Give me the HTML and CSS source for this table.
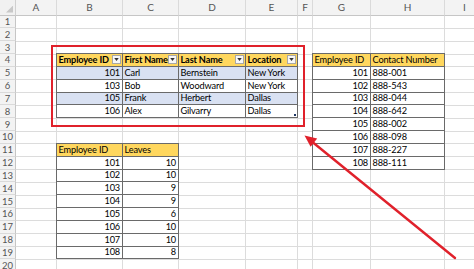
FILE: index.html
```html
<!DOCTYPE html>
<html>
<head>
<meta charset="utf-8">
<link rel="stylesheet" href="styles.css">
</head>
<body>
<div class="sheet">
  <div class="corner"></div>
  <div class="ch">A</div><div class="ch">B</div><div class="ch">C</div><div class="ch">D</div><div class="ch">E</div><div class="ch">F</div><div class="ch">G</div><div class="ch">H</div><div class="ch">I</div>
  <div class="rh">1</div><div class="rh">2</div><div class="rh">3</div><div class="rh">4</div><div class="rh">5</div>
  <div class="rh">6</div><div class="rh">7</div><div class="rh">8</div><div class="rh">9</div><div class="rh">10</div>
  <div class="rh">11</div><div class="rh">12</div><div class="rh">13</div><div class="rh">14</div><div class="rh">15</div>
  <div class="rh">16</div><div class="rh">17</div><div class="rh">18</div><div class="rh">19</div><div class="rh">20</div>

  <div class="cells">
    <div></div><div></div><div></div><div></div><div></div><div></div><div></div><div></div><div></div>
  </div>

  <div class="tbl t1">
    <div class="hd">Employee ID<span class="dd"><svg viewBox="0 0 6 4" width="5" height="3"><path d="M0 0H6L3 4Z" fill="#333"/></svg></span></div>
    <div class="hd">First Name<span class="dd"><svg viewBox="0 0 6 4" width="5" height="3"><path d="M0 0H6L3 4Z" fill="#333"/></svg></span></div>
    <div class="hd">Last Name<span class="dd"><svg viewBox="0 0 6 4" width="5" height="3"><path d="M0 0H6L3 4Z" fill="#333"/></svg></span></div>
    <div class="hd">Location<span class="dd"><svg viewBox="0 0 6 4" width="5" height="3"><path d="M0 0H6L3 4Z" fill="#333"/></svg></span></div>
    <div class="num band">101</div><div class="band">Carl</div><div class="band">Bernstein</div><div class="band">New York</div>
    <div class="num">103</div><div>Bob</div><div>Woodward</div><div>New York</div>
    <div class="num band">105</div><div class="band">Frank</div><div class="band">Herbert</div><div class="band">Dallas</div>
    <div class="num">106</div><div>Alex</div><div>Gilvarry</div><div class="last">Dallas</div>
  </div>

  <div class="tbl t2">
    <div class="hd">Employee ID</div><div class="hd">Contact Number</div>
    <div class="num">101</div><div>888-001</div>
    <div class="num">102</div><div>888-543</div>
    <div class="num">103</div><div>888-044</div>
    <div class="num">104</div><div>888-642</div>
    <div class="num">105</div><div>888-002</div>
    <div class="num">106</div><div>888-098</div>
    <div class="num">107</div><div>888-227</div>
    <div class="num">108</div><div>888-111</div>
  </div>

  <div class="tbl t3">
    <div class="hd">Employee ID</div><div class="hd">Leaves</div>
    <div class="num">101</div><div class="num">10</div>
    <div class="num">102</div><div class="num">10</div>
    <div class="num">103</div><div class="num">9</div>
    <div class="num">104</div><div class="num">9</div>
    <div class="num">105</div><div class="num">6</div>
    <div class="num">106</div><div class="num">10</div>
    <div class="num">107</div><div class="num">10</div>
    <div class="num">108</div><div class="num">8</div>
  </div>

  <div class="redbox"></div>
  <svg class="arrow" width="474" height="269" viewBox="0 0 474 269">
    <line x1="455" y1="258" x2="313" y2="142.5" stroke="#e0212b" stroke-width="2.4" stroke-linecap="round"/>
    <path d="M304.5 135.5 L317.2 138.6 L310.6 146.8 Z" fill="#e0212b"/>
  </svg>
</div>
</body>
</html>
```

FILE: styles.css
```css
* { box-sizing: border-box; }
html, body { margin: 0; padding: 0; background: #fff; }
body {
  width: 474px;
  height: 269px;
  overflow: hidden;
  font-family: "Lato", "Liberation Sans", sans-serif;
}
.sheet {
  position: relative;
  display: grid;
  width: 485px;
  grid-template-columns: 16px 41px 66px 56px 67px 52px 15px 58px 74px 40px;
  grid-template-rows: 15.6px repeat(20, 12.84px);
}
.corner {
  position: relative;
  background: #f1f1f1;
  border-right: 1px solid #d0d0d0;
  border-bottom: 1px solid #c6c6c6;
}
.corner::after {
  content: "";
  position: absolute;
  right: 2px;
  bottom: 2px;
  width: 7px;
  height: 7px;
  background: #c8c8c8;
  clip-path: polygon(100% 0, 100% 100%, 0 100%);
}
.ch {
  background: #f3f3f3;
  border-right: 1px solid #dadada;
  border-bottom: 1px solid #c6c6c6;
  color: #555;
  font-size: 10px;
  display: flex;
  align-items: center;
  justify-content: center;
}
.rh {
  grid-column: 1;
  background: #f3f3f3;
  border-right: 1px solid #c6c6c6;
  border-bottom: 1px solid #dadada;
  color: #555;
  font-size: 9.5px;
  display: flex;
  align-items: center;
  justify-content: center;
}
.cells {
  grid-column: 2 / -1;
  grid-row: 2 / -1;
  display: grid;
  grid-template-columns: 41px 66px 56px 67px 52px 15px 58px 74px 40px;
  background: repeating-linear-gradient(to bottom, transparent 0 11.84px, #dcdcdc 11.84px 12.84px);
}
.cells > div { border-right: 1px solid #dcdcdc; }

.tbl {
  display: grid;
  margin: -1px 0 0 -1px;
  border-left: 1px solid #6a6a6a;
  border-top: 1px solid #6a6a6a;
  background: #fff;
  font-size: 9.2px;
  letter-spacing: -0.15px;
  color: #000;
  grid-auto-rows: 12.84px;
}
.tbl > div {
  border-right: 1px solid #6a6a6a;
  border-bottom: 1px solid #6a6a6a;
  padding: 0 2px 0 1.5px;
  display: flex;
  align-items: center;
  white-space: nowrap;
  overflow: hidden;
  line-height: 12px;
}
.tbl > .num { justify-content: flex-end; }
.tbl > .hd { background: #ffd75e; }
.tbl > .band { background: #d9e1f2; }

.t1 { grid-column: 3 / 7; grid-row: 5 / 10; grid-template-columns: 66px 56px 67px 52px; position: relative; }
.t1 > .hd { font-weight: bold; justify-content: space-between; padding-right: 1px; }
.t1 > .last { position: relative; }
.t1 > .last::after {
  content: "";
  position: absolute;
  right: 1px;
  bottom: 1px;
  width: 2px;
  height: 2px;
  background: #1f3864;
}
.dd {
  width: 9px;
  height: 9px;
  flex: none;
  border: 1px solid #a8a8a8;
  background: #f7f7f7;
  display: flex;
  align-items: center;
  justify-content: center;
}
.dd svg { display: block; }

.t2 { grid-column: 8 / 10; grid-row: 5 / 14; grid-template-columns: 58px 74px; }
.t3 { grid-column: 3 / 5; grid-row: 12 / 21; grid-template-columns: 66px 56px; }

.redbox {
  position: absolute;
  left: 51px;
  top: 45px;
  width: 254px;
  height: 82px;
  border: 2px solid #e0212b;
}
.arrow {
  position: absolute;
  left: 0;
  top: 0;
  pointer-events: none;
}
```
